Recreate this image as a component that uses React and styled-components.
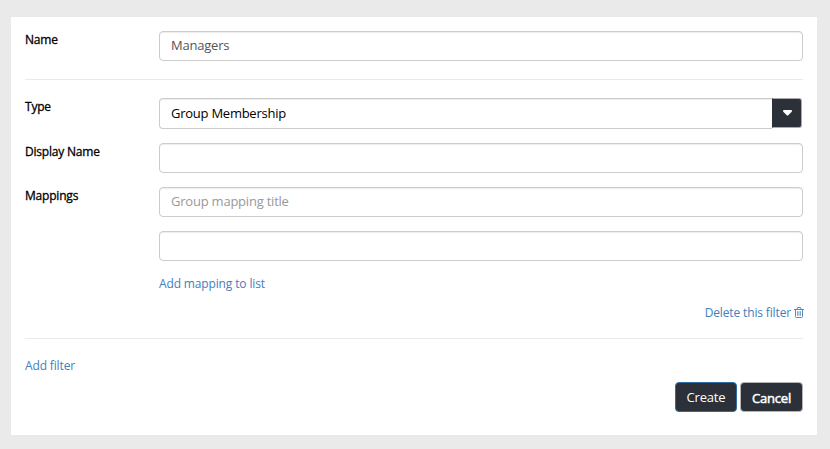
import React from "react";
import styled, { createGlobalStyle } from "styled-components";

const GlobalStyle = createGlobalStyle`
  *, *::before, *::after { box-sizing: border-box; }
  body {
    margin: 0;
    background: #eaeaea;
    font-family: "Open Sans", sans-serif;
    font-size: 13px;
    color: #000;
  }
`;

const Page = styled.div`
  height: 449px;
  padding: 17px 13px 14px 11px;
  overflow: hidden;
`;

const Panel = styled.form`
  height: 418px;
  padding: 14px 14px 0;
  background: #fff;
`;

const Row = styled.div`
  display: grid;
  grid-template-columns: 134px 1fr;
  align-items: start;
  margin-bottom: ${(p) => p.$gap ?? 14}px;
`;

const Label = styled.label`
  font-size: 12px;
  line-height: 17px;
  letter-spacing: -0.2px;
  -webkit-text-stroke: 0.3px #000;
`;

const Fields = styled.div`
  display: flex;
  flex-direction: column;
  gap: 14px;
`;

const Input = styled.input`
  width: 100%;
  height: 30px;
  padding: 0 11px 2px;
  border: 1px solid #ccc;
  border-radius: 4px;
  background: #fff;
  box-shadow: inset 0 1px 1px rgba(0, 0, 0, 0.075);
  color: #555;
  font: 13px "Open Sans", sans-serif;
  letter-spacing: -0.22px;
  outline: none;
  &::placeholder { color: #999; opacity: 1; }
`;

const Select = styled.div`
  display: flex;
  height: 31px;
  padding-right: 1px;
`;

const SelectValue = styled.div`
  flex: 1;
  padding-left: 11px;
  border: 1px solid #ccc;
  border-right: 0;
  border-radius: 4px 0 0 4px;
  box-shadow: inset 0 1px 1px rgba(0, 0, 0, 0.075);
  letter-spacing: -0.25px;
  line-height: 29px;
`;

const SelectToggle = styled.button`
  display: flex;
  align-items: center;
  justify-content: center;
  width: 30px;
  height: 30px;
  padding: 0;
  border: 1px solid #aaa;
  border-left-color: #2c3139;
  border-radius: 0 3px 3px 0;
  background: #2c3139;
`;

const Divider = styled.hr`
  height: 1px;
  margin: 0 0 18px;
  border: 0;
  background: #eaeaea;
`;

const Link = styled.a`
  display: flex;
  align-items: center;
  gap: 3px;
  width: fit-content;
  color: #447ebc;
  font-size: 12px;
  line-height: 17px;
  letter-spacing: -0.14px;
  text-decoration: none;
  cursor: pointer;
`;

const DeleteRow = styled.div`
  display: flex;
  justify-content: flex-end;
  height: 17px;
  margin-right: -1px;
  margin-bottom: 17px;
`;

const Actions = styled.div`
  display: flex;
  justify-content: flex-end;
  gap: 3px;
  margin-top: 8px;
`;

const Button = styled.button`
  width: ${(p) => (p.$primary ? 62 : 63)}px;
  height: 30px;
  padding: ${(p) => (p.$primary ? "0" : "2px")} 0 0;
  border: 1px solid ${(p) => (p.$primary ? "#2e6da4" : "#b5b5b5")};
  border-radius: 4px;
  background: #2c3139;
  color: #fff;
  font: 13px "Open Sans", sans-serif;
  letter-spacing: -0.2px;
  -webkit-text-stroke: ${(p) => (p.$primary ? "0" : "0.5px #fff")};
`;

const Caret = () => (
  <svg width="9" height="6" viewBox="0 0 9 6" aria-hidden="true">
    <path d="M1 0H8Q9 0 9 1Q9 1.6 8.5 2L5.2 5.3Q4.5 6 3.8 5.3L.5 2Q0 1.6 0 1Q0 0 1 0Z" fill="#fff" />
  </svg>
);

const Trash = () => (
  <svg width="10" height="11" viewBox="0 0 10 11" fill="none" stroke="#447ebc" aria-hidden="true">
    <path d="M0 2.5H10M3 2.3L3.5.5H6.5L7 2.3M1.5 2.5V9.5Q1.5 10.5 2.5 10.5H7.5Q8.5 10.5 8.5 9.5V2.5" strokeWidth=".9" />
    <path d="M3.5 4.2V8.8M5 4.2V8.8M6.5 4.2V8.8" strokeWidth=".7" />
  </svg>
);

export default function App() {
  return (
    <>
      <GlobalStyle />
      <Page>
        <Panel>
          <Row $gap={18}>
            <Label>Name</Label>
            <Input defaultValue="Managers" />
          </Row>
          <Divider />
          <Row>
            <Label>Type</Label>
            <Select>
              <SelectValue>Group Membership</SelectValue>
              <SelectToggle type="button" aria-label="Choose type"><Caret /></SelectToggle>
            </Select>
          </Row>
          <Row>
            <Label>Display Name</Label>
            <Input />
          </Row>
          <Row $gap={12}>
            <Label>Mappings</Label>
            <Fields>
              <Input placeholder="Group mapping title" />
              <Input />
              <Link>Add mapping to list</Link>
            </Fields>
          </Row>
          <DeleteRow>
            <Link>Delete this filter <Trash /></Link>
          </DeleteRow>
          <Divider />
          <Link>Add filter</Link>
          <Actions>
            <Button type="button" $primary>Create</Button>
            <Button type="button">Cancel</Button>
          </Actions>
        </Panel>
      </Page>
    </>
  );
}
